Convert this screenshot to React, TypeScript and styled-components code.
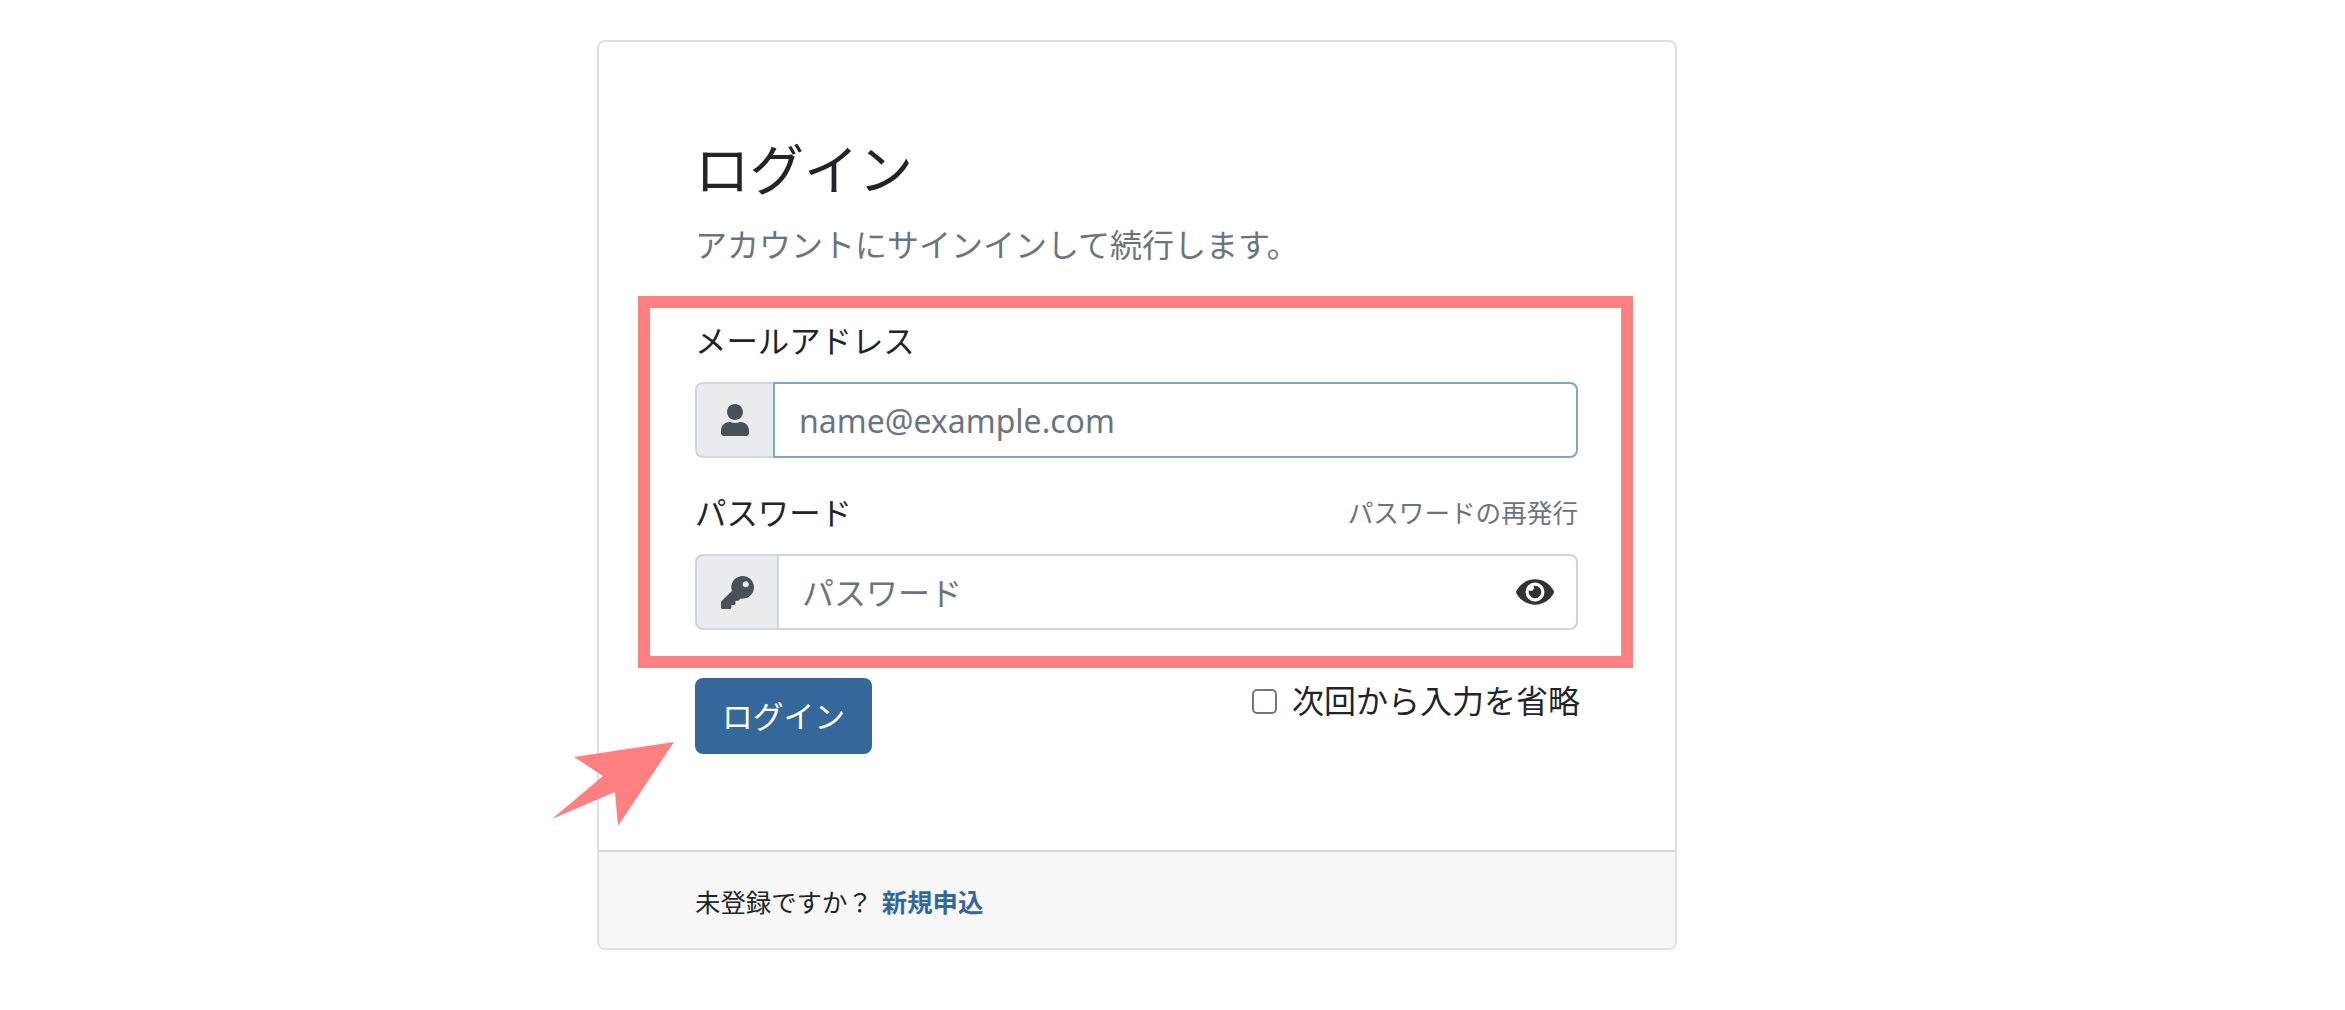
import React from "react";
import styled, { createGlobalStyle } from "styled-components";
import { FaEye, FaKey, FaUser } from "react-icons/fa";

const GlobalStyle = createGlobalStyle`
  html, body {
    margin: 0;
    padding: 0;
    background: #fff;
    font-family: "Noto Sans", "Noto Sans CJK JP", sans-serif;
    color: #212529;
  }
  * {
    box-sizing: border-box;
  }
`;

const Page = styled.div`
  position: relative;
  width: 2345px;
  height: 1010px;
  padding: 40px 0 0 597px;
  overflow: hidden;
`;

const Card = styled.div`
  width: 1080px;
  border: 2px solid #e0e0e1;
  border-radius: 8px;
  overflow: hidden;
`;

const CardBody = styled.div`
  padding: 95px 97px 96px 96px;
`;

const Title = styled.h1`
  margin: 0;
  font-size: 54.5px;
  line-height: 64px;
  font-weight: 400;
  color: #212529;
`;

const Subtitle = styled.p`
  margin: 21px 0 50px;
  font-size: 32px;
  line-height: 46px;
  color: #6c757d;
`;

const LabelRow = styled.div<{ $top?: number }>`
  display: flex;
  justify-content: space-between;
  align-items: center;
  margin: ${(p) => p.$top ?? 0}px 0 18px;
`;

const FieldLabel = styled.label`
  font-size: 31.4px;
  line-height: 46px;
  color: #212529;
`;

const ForgotLink = styled.a`
  padding-top: 2px;
  font-size: 25.6px;
  line-height: 44px;
  color: #6c757d;
  text-decoration: none;
`;

const InputGroup = styled.div`
  display: flex;
  position: relative;
  height: 76px;
`;

const Addon = styled.span<{ $width: number }>`
  display: flex;
  align-items: center;
  justify-content: center;
  flex: 0 0 ${(p) => p.$width}px;
  background: #e9ecef;
  border: 2px solid #d3d6da;
  border-right: 0;
  border-radius: 8px 0 0 8px;
  color: #495057;
`;

const TextInput = styled.input<{ $focused?: boolean; $inset: number }>`
  flex: 1;
  min-width: 0;
  height: 100%;
  padding: 0 24px 0 ${(p) => p.$inset}px;
  border: 2px solid ${(p) => (p.$focused ? "#7fa5ca" : "#d0d3d7")};
  border-radius: 0 8px 8px 0;
  outline: none;
  background: #fff;
  font-family: inherit;
  font-size: 32px;
  color: #212529;

  &::placeholder {
    color: #6c757d;
    opacity: 1;
  }
`;

const EyeButton = styled.span`
  position: absolute;
  right: 24px;
  top: 0;
  bottom: 0;
  display: flex;
  align-items: center;
  color: #333;
`;

const Actions = styled.div`
  display: flex;
  justify-content: space-between;
  align-items: flex-start;
  margin-top: 48px;
`;

const SubmitButton = styled.button`
  width: 177px;
  height: 76px;
  padding: 0 0 3px;
  border: 0;
  border-radius: 8px;
  background: #34689a;
  color: #fff;
  font-family: inherit;
  font-size: 30.8px;
`;

const RememberLabel = styled.label`
  display: flex;
  align-items: center;
  gap: 15px;
  margin-right: -2px;
  font-size: 32px;
  line-height: 46px;
  color: #212529;
`;

const Checkbox = styled.input`
  appearance: none;
  width: 25px;
  height: 25px;
  margin: 0;
  border: 2px solid #767676;
  border-radius: 5px;
  background: #fff;
`;

const CardFooter = styled.div`
  height: 98px;
  padding: 2px 96px 0;
  display: flex;
  align-items: center;
  border-top: 2px solid #d6d6d8;
  background: #f7f7f8;
  font-size: 25.4px;
  color: #212529;
`;

const SignupLink = styled.a`
  margin-left: 9px;
  font-weight: 700;
  color: #34689a;
  text-decoration: none;
`;

// annotations drawn on top of the screenshot
const HighlightBox = styled.div`
  position: absolute;
  left: 638px;
  top: 296px;
  width: 995px;
  height: 372px;
  border: 12px solid #ff8080;
  pointer-events: none;
`;

const Arrow = styled.svg`
  position: absolute;
  left: 550px;
  top: 740px;
`;

export default function App() {
  return (
    <Page>
      <GlobalStyle />
      <Card>
        <CardBody>
          <Title>ログイン</Title>
          <Subtitle>アカウントにサインインして続行します。</Subtitle>

          <LabelRow>
            <FieldLabel>メールアドレス</FieldLabel>
          </LabelRow>
          <InputGroup>
            <Addon $width={78}>
              <FaUser size={32} />
            </Addon>
            <TextInput $focused $inset={24} type="text" placeholder="name@example.com" />
          </InputGroup>

          <LabelRow $top={32}>
            <FieldLabel>パスワード</FieldLabel>
            <ForgotLink href="#">パスワードの再発行</ForgotLink>
          </LabelRow>
          <InputGroup>
            <Addon $width={82}>
              <FaKey size={33} />
            </Addon>
            <TextInput $inset={23} type="password" placeholder="パスワード" />
            <EyeButton>
              <FaEye size={38} />
            </EyeButton>
          </InputGroup>

          <Actions>
            <SubmitButton>ログイン</SubmitButton>
            <RememberLabel>
              <Checkbox type="checkbox" />
              次回から入力を省略
            </RememberLabel>
          </Actions>
        </CardBody>
        <CardFooter>
          未登録ですか？
          <SignupLink href="#">新規申込</SignupLink>
        </CardFooter>
      </Card>

      <HighlightBox />
      <Arrow width="128" height="90" viewBox="0 0 128 90">
        <path d="M24 17 L53 36 L2 79 L65 52 L68 86 L124 2 Z" fill="#ff8080" />
      </Arrow>
    </Page>
  );
}
